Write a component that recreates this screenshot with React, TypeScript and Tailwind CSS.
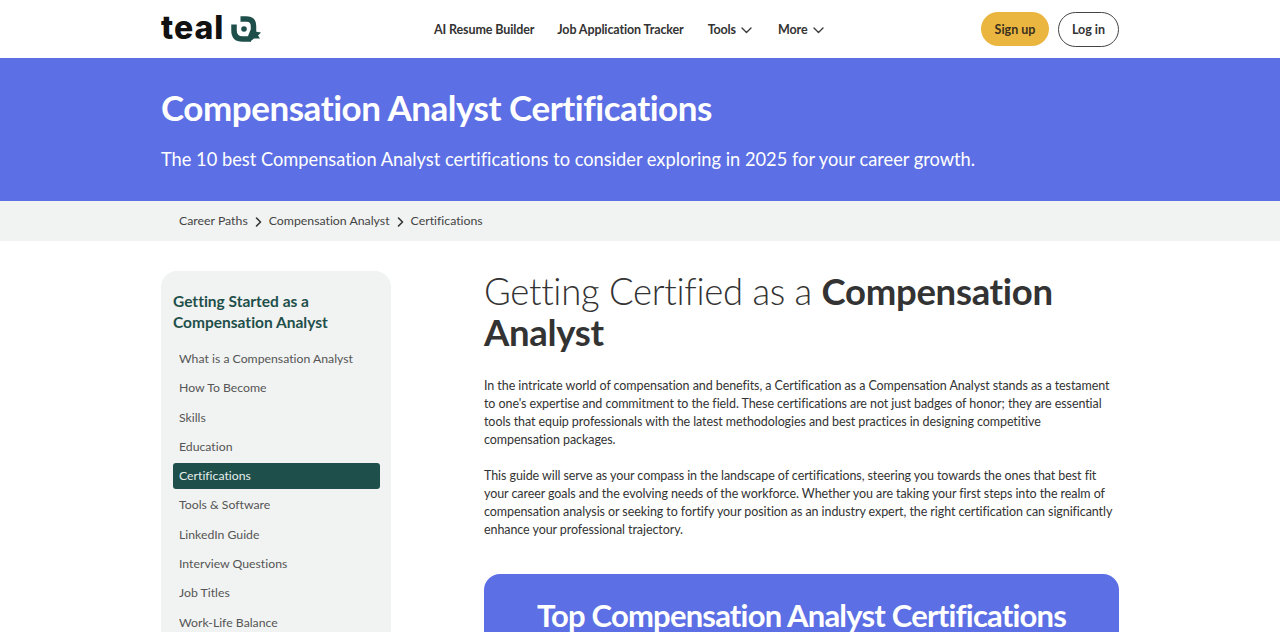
import React from "react";

const F = "font-['Lato','Liberation_Sans',sans-serif] [font-variant-ligatures:none]";

function Chevron() {
  return (
    <svg width="11" height="7" viewBox="0 0 11 7" fill="none" stroke="#3a3a3a" strokeWidth="1.4" strokeLinecap="round" strokeLinejoin="round">
      <path d="M1 1l4.500 4.500L10 1" />
    </svg>
  );
}

function Crumb() {
  return (
    <svg width="7" height="10" viewBox="0 0 7 10" fill="none" stroke="#333" strokeWidth="1.6" strokeLinecap="round" strokeLinejoin="round">
      <path d="M1.500 1 5.500 5l-4 4" />
    </svg>
  );
}

function Mark() {
  return (
    <svg width="30" height="26" viewBox="0 0 30 26" fill="none">
      <path d="M9.500 3H15.500Q22.500 3 22.500 10V17" stroke="#1f4f4a" strokeWidth="5.500" />
      <path d="M3 8.500V14.500Q3 23 11.500 23H20" stroke="#1f4f4a" strokeWidth="5.500" />
      <path d="M19.500 14 24 15.500 30 16.500 27 19.500 29 22.500 23 22.500 19 25.700 17 20Z" fill="#1f4f4a" />
      <circle cx="13" cy="13" r="2.800" fill="#1f4f4a" />
    </svg>
  );
}

const items = [
  "What is a Compensation Analyst",
  "How To Become",
  "Skills",
  "Education",
  "Certifications",
  "Tools & Software",
  "LinkedIn Guide",
  "Interview Questions",
  "Job Titles",
  "Work-Life Balance",
];

export default function App() {
  return (
    <div className={`${F} h-[632px] overflow-hidden bg-white text-[#333]`}>
      <header className="h-[58px] flex items-center justify-center">
        <div className="w-[958px] flex items-center">
          <div className="w-[273px] flex items-center gap-[7px]">
            <span className="font-['Inter',sans-serif] text-[32px] leading-none font-extrabold tracking-[1px] text-[#111] relative top-[-1px]">teal</span>
            <Mark />
          </div>
          <nav className="flex items-center pt-[2px] text-[12.500px] font-bold text-[#333] tracking-[-0.12px]">
            <span className="mr-[23px]">AI Resume Builder</span>
            <span className="mr-[24px]">Job Application Tracker</span>
            <span className="mr-[26px] flex items-center gap-[5px]">Tools <Chevron /></span>
            <span className="flex items-center gap-[6px]">More <Chevron /></span>
          </nav>
          <div className="ml-auto flex items-center gap-[9px] text-[12.500px] font-bold">
            <span className="h-[34px] w-[68px] pt-[2px] rounded-full bg-[#ebb63f] flex items-center justify-center text-[#3a3020]">Sign up</span>
            <span className="h-[35px] w-[61px] pt-[2px] rounded-full border border-[#444] flex items-center justify-center">Log in</span>
          </div>
        </div>
      </header>

      <section className="h-[143px] bg-[#5c6fe4] flex justify-center">
        <div className="w-[958px] text-white">
          <h1 className="mt-[28px] text-[35px] leading-[42px] font-bold tracking-[-0.47px]">Compensation Analyst Certifications</h1>
          <p className="mt-[17px] text-[18.250px] leading-[28px]">The 10 best Compensation Analyst certifications to consider exploring in 2025 for your career growth.</p>
        </div>
      </section>

      <div className="h-[40px] bg-[#f1f3f2] flex justify-center">
        <div className="w-[958px] pl-[18px] pt-[1px] flex items-center gap-[7px] text-[12.300px] text-[#444]">
          <span>Career Paths</span>
          <Crumb />
          <span>Compensation Analyst</span>
          <Crumb />
          <span>Certifications</span>
        </div>
      </div>

      <div className="flex justify-center pt-[30px]">
        <div className="w-[958px] flex items-start">
          <aside className="w-[230px] shrink-0 rounded-[16px] bg-[#f1f3f2] pl-[12px] pr-[11px] pt-[20px] pb-[20px]">
            <h3 className="text-[15.500px] leading-[21px] font-bold text-[#1f4f4a]">Getting Started as a<br />Compensation Analyst</h3>
            <ul className="mt-[13px] flex flex-col gap-[3px] text-[12.250px] text-[#555]">
              {items.map((t) =>
                t === "Certifications" ? (
                  <li key={t} className="h-[26.300px] flex items-center px-[6px] rounded-[3px] bg-[#1f4f4a] text-[#e6eeec]">{t}</li>
                ) : (
                  <li key={t} className="h-[26.300px] flex items-center px-[6px]">{t}</li>
                )
              )}
            </ul>
          </aside>

          <main className="ml-[93px] w-[635px]">
            <h2 className="text-[36.500px] leading-[41px] font-light tracking-[-0.3px] text-[#333]">Getting Certified as a <b className="font-bold">Compensation Analyst</b></h2>
            <p className="mt-[24px] text-[12.500px] leading-[18px] text-[#333] tracking-[-0.08px]">In the intricate world of compensation and benefits, a Certification as a Compensation Analyst stands as a testament to one's expertise and commitment to the field. These certifications are not just badges of honor; they are essential tools that equip professionals with the latest methodologies and best practices in designing competitive compensation packages.</p>
            <p className="mt-[18px] text-[12.500px] leading-[18px] text-[#333] tracking-[-0.08px]">This guide will serve as your compass in the landscape of certifications, steering you towards the ones that best fit your career goals and the evolving needs of the workforce. Whether you are taking your first steps into the realm of compensation analysis or seeking to fortify your position as an industry expert, the right certification can significantly enhance your professional trajectory.</p>
            <div className="mt-[35px] h-[120px] rounded-[16px] bg-[#5c6fe4] pt-[21px] text-center text-white text-[31px] leading-[40px] font-bold tracking-[-0.8px]">Top Compensation Analyst Certifications</div>
          </main>
        </div>
      </div>
    </div>
  );
}
